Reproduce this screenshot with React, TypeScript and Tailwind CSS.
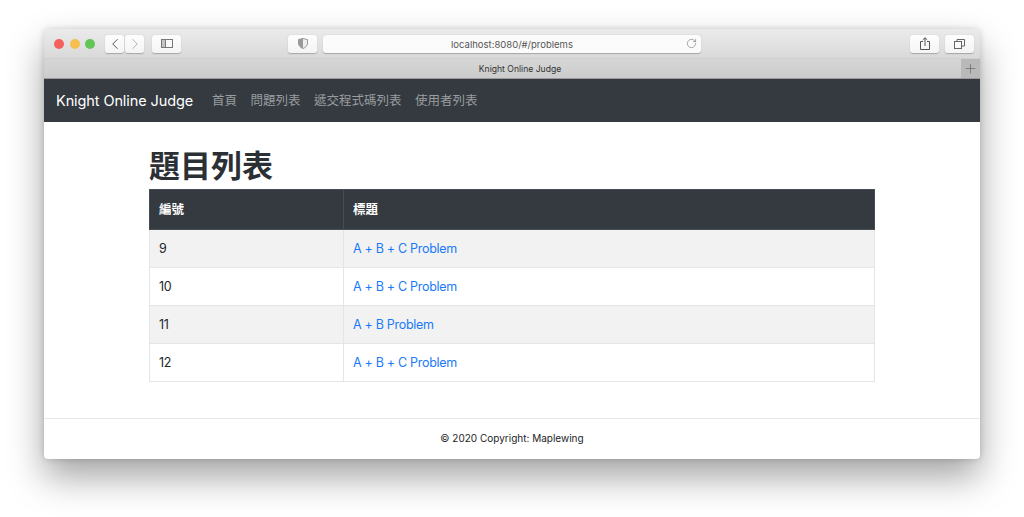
import { ChevronLeft, ChevronRight, Plus, RotateCw } from 'lucide-react'

const navLinks = ['首頁', '問題列表', '遞交程式碼列表', '使用者列表']

const problems = [
  { id: 9, title: 'A + B + C Problem' },
  { id: 10, title: 'A + B + C Problem' },
  { id: 11, title: 'A + B Problem' },
  { id: 12, title: 'A + B + C Problem' },
]

const ToolButton = ({ className, children }: { className: string; children: React.ReactNode }) => (
  <div className={`flex h-[18px] items-center justify-center rounded-[3px] bg-gradient-to-b from-[#fdfdfd] to-[#f4f4f4] shadow-[0_0.5px_1px_rgba(0,0,0,0.25)] ${className}`}>
    {children}
  </div>
)

const Toolbar = () => (
  <div className="flex h-[30px] items-center border-b border-[#cfcfcf] bg-gradient-to-b from-[#ebebeb] to-[#d9d9d9] pl-[10px] pr-[6px]">
    <div className="flex gap-[5.500px]">
      <span className="h-[10px] w-[10px] rounded-full bg-[#f4605a]" />
      <span className="h-[10px] w-[10px] rounded-full bg-[#f6bd4f]" />
      <span className="h-[10px] w-[10px] rounded-full bg-[#62c555]" />
    </div>
    <div className="ml-[10px] flex gap-[1px]">
      <ToolButton className="w-[19px]"><ChevronLeft size={18} strokeWidth={1.2} className="text-[#444]" /></ToolButton>
      <ToolButton className="w-[19px]"><ChevronRight size={18} strokeWidth={1.2} className="text-[#aaa]" /></ToolButton>
    </div>
    <ToolButton className="ml-[8px] w-[29px]">
      <svg width="12" height="9" viewBox="0 0 12 9" fill="none">
        <rect x="0.5" y="0.5" width="11" height="8" stroke="#777" />
        <rect x="1" y="1" width="3" height="7" fill="#c4c4c4" />
        <path d="M4.500 1v7" stroke="#777" />
      </svg>
    </ToolButton>
    <ToolButton className="ml-[107px] w-[29px]">
      <svg width="10" height="11" viewBox="0 0 10 11">
        <path d="M5 .5 9.500 1.500V5c0 2.800-2 4.500-4.500 5.500C2.500 9.500.5 7.800.5 5V1.500z" fill="#eee" stroke="#999" />
        <path d="M5 .5V10.500C2.500 9.500.5 7.800.5 5V1.500z" fill="#999" />
      </svg>
    </ToolButton>
    <ToolButton className="relative ml-[6px] w-[378px] bg-none bg-[#fbfbfb]">
      <span className="pt-[3px] text-[9.500px] text-[#555]">localhost:8080/#/problems</span>
      <RotateCw size={11} strokeWidth={1.2} className="absolute right-[4px] text-[#666]" />
    </ToolButton>
    <ToolButton className="ml-auto w-[29px]">
      <svg width="10" height="13" viewBox="0 0 10 13" fill="none" stroke="#555">
        <path d="M3 4.500H.5v8h9v-8H7" />
        <path d="M5 9V.8M2.800 2.800 5 .8l2.200 2" />
      </svg>
    </ToolButton>
    <ToolButton className="ml-[6px] w-[29px]">
      <svg width="11" height="10" viewBox="0 0 11 10" fill="none" stroke="#666">
        <rect x="0.5" y="2.500" width="7" height="7" />
        <path d="M3 2.500V.5h7.500V7H8" />
      </svg>
    </ToolButton>
  </div>
)

const TabBar = () => (
  <div className="flex h-[20px] items-center border-b border-[#9a9a9a] bg-gradient-to-b from-[#d6d6d6] to-[#cccccc]">
    <span className="flex-1 pl-[35px] pt-[1px] text-center text-[8.600px] text-[#333]">Knight Online Judge</span>
    <div className="flex h-full w-[19px] items-center justify-center bg-[#b9b9b9]">
      <Plus size={15} strokeWidth={0.9} className="text-[#555]" />
    </div>
  </div>
)

const Navbar = () => (
  <nav className="flex h-[43px] items-center bg-[#343a40] pl-[12px] pt-[1px]">
    <span className="text-[14.500px] tracking-[-0.1px] text-white">Knight Online Judge</span>
    <div className="ml-[19px] flex gap-[13.500px]">
      {navLinks.map((link) => (
        <span key={link} className="text-[12.500px] text-[#9a9d9f]">{link}</span>
      ))}
    </div>
  </nav>
)

const ProblemTable = () => (
  <table className="w-full table-fixed border-collapse text-[12.500px] tracking-[-0.3px]">
    <thead>
      <tr className="h-[40px] bg-[#343a40] text-left text-white">
        <th className="w-[194px] border border-[#454d55] pl-[9px] pt-[1px] font-bold tracking-normal">編號</th>
        <th className="border border-[#454d55] pl-[9px] pt-[1px] font-bold tracking-normal">標題</th>
      </tr>
    </thead>
    <tbody>
      {problems.map((problem, index) => (
        <tr key={problem.id} className={`h-[38px] ${index % 2 === 0 ? 'bg-[#f2f2f2]' : 'bg-white'}`}>
          <td className="border border-[#e3e5e8] pl-[9px] pt-[2px] text-[#212529]">{problem.id}</td>
          <td className="border border-[#e3e5e8] pl-[9px] pt-[2px] text-[#1a7af8]">{problem.title}</td>
        </tr>
      ))}
    </tbody>
  </table>
)

export default function App() {
  return (
    <div className="h-[517px] overflow-hidden bg-white pl-[44px] pr-[44px] pt-[29px] font-['Inter','Noto_Sans_CJK_TC',sans-serif]">
      <div className="h-[430px] overflow-hidden rounded-[4px] bg-white shadow-[0_18px_36px_rgba(0,0,0,0.36),0_0_6px_rgba(0,0,0,0.16)]">
        <Toolbar />
        <TabBar />
        <Navbar />
        <main className="px-[105px] pt-[22px]">
          <h1 className="mb-[1px] text-[31px] leading-[44px] font-semibold text-[#2b3035]">題目列表</h1>
          <ProblemTable />
        </main>
        <footer className="mt-[36px] border-t border-[#e6e6e6] pt-[12px] text-center text-[10px] text-[#212529]">
          © 2020 Copyright: Maplewing
        </footer>
      </div>
    </div>
  )
}
